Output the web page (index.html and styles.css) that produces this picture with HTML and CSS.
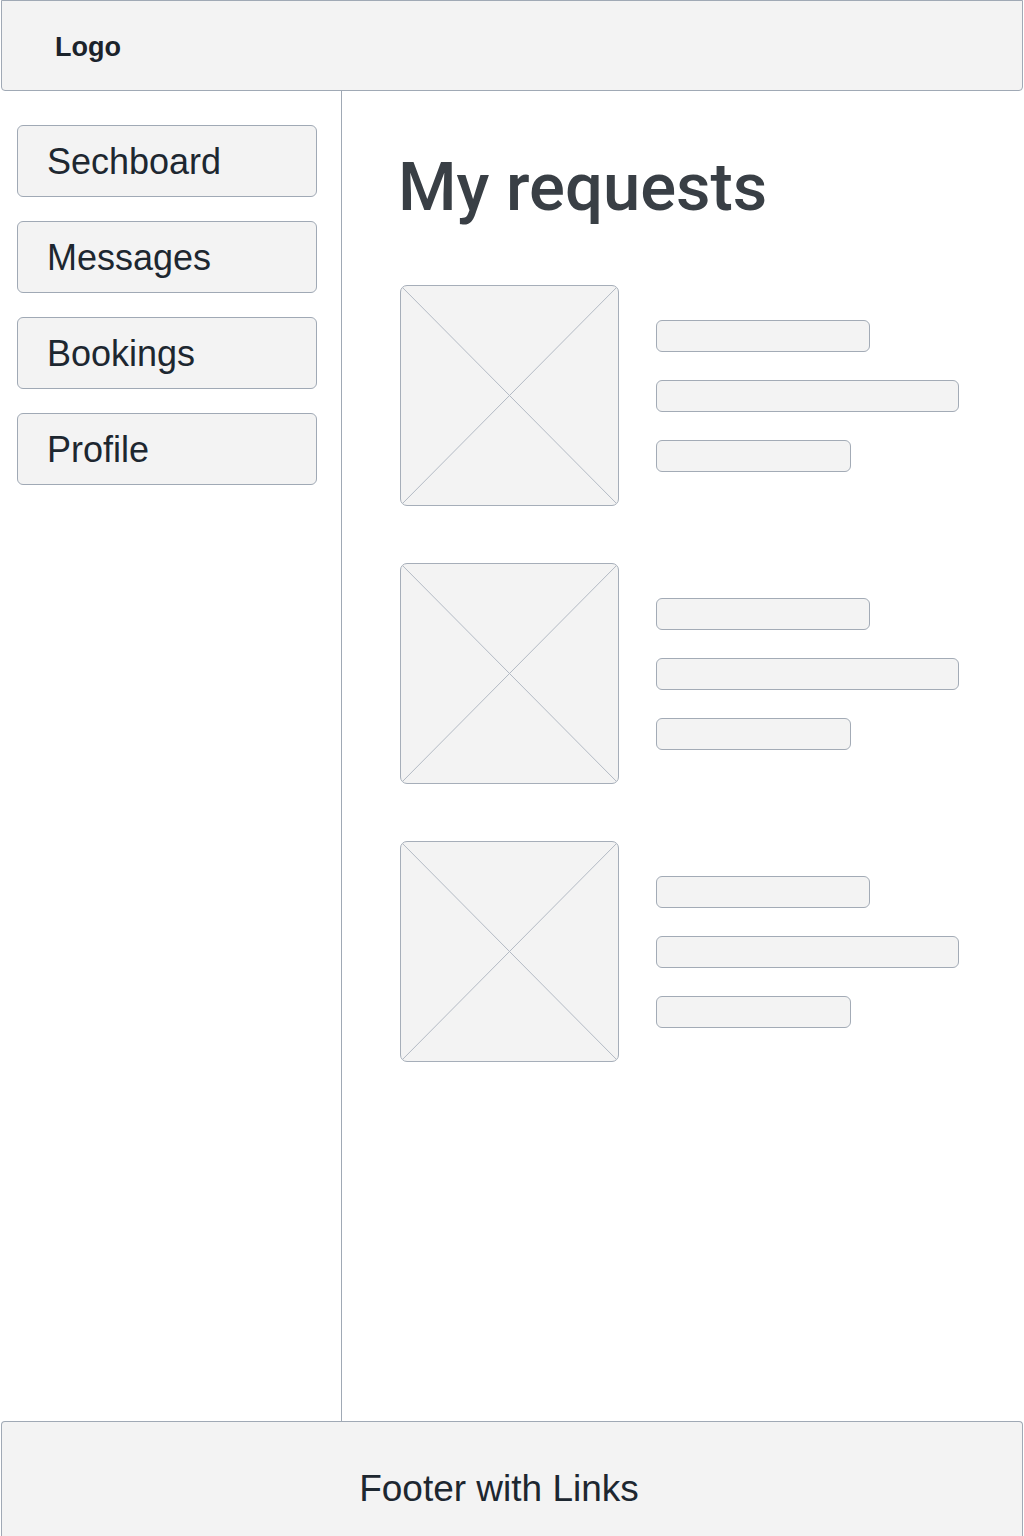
FILE: index.html
```html
<!DOCTYPE html>
<html lang="en">
<head>
<meta charset="utf-8">
<title>My requests</title>
<link rel="stylesheet" href="styles.css">
</head>
<body>
<div class="page">
  <header class="topbar">
    <div class="logo">Logo</div>
  </header>
  <div class="middle">
    <nav class="sidebar">
      <a class="nav-btn">Sechboard</a>
      <a class="nav-btn">Messages</a>
      <a class="nav-btn">Bookings</a>
      <a class="nav-btn">Profile</a>
    </nav>
    <main class="content">
      <h1 class="title">My requests</h1>
      <div class="list">
        <div class="card">
          <div class="thumb">
            <svg viewBox="0 0 100 100" preserveAspectRatio="none"><line x1="0" y1="0" x2="100" y2="100"/><line x1="100" y1="0" x2="0" y2="100"/></svg>
          </div>
          <div class="lines">
            <div class="bar bar-a"></div>
            <div class="bar bar-b"></div>
            <div class="bar bar-c"></div>
          </div>
        </div>
        <div class="card">
          <div class="thumb">
            <svg viewBox="0 0 100 100" preserveAspectRatio="none"><line x1="0" y1="0" x2="100" y2="100"/><line x1="100" y1="0" x2="0" y2="100"/></svg>
          </div>
          <div class="lines">
            <div class="bar bar-a"></div>
            <div class="bar bar-b"></div>
            <div class="bar bar-c"></div>
          </div>
        </div>
        <div class="card">
          <div class="thumb">
            <svg viewBox="0 0 100 100" preserveAspectRatio="none"><line x1="0" y1="0" x2="100" y2="100"/><line x1="100" y1="0" x2="0" y2="100"/></svg>
          </div>
          <div class="lines">
            <div class="bar bar-a"></div>
            <div class="bar bar-b"></div>
            <div class="bar bar-c"></div>
          </div>
        </div>
      </div>
    </main>
  </div>
  <footer class="footer">
    <span class="footer-text">Footer with Links</span>
  </footer>
</div>
</body>
</html>
```
FILE: styles.css
```css
* { box-sizing: border-box; }
html, body { margin: 0; padding: 0; background: #ffffff; }
body {
  font-family: "Liberation Sans", Arial, sans-serif;
  color: #1f2830;
}
.page {
  height: 1536px;
  display: flex;
  flex-direction: column;
  overflow: hidden;
}
.topbar {
  height: 91px;
  flex: none;
  background: #f3f3f3;
  border: 1px solid #a0a9b5;
  border-radius: 0 0 4px 4px;
  margin: 0 1px;
  display: flex;
  align-items: center;
  padding-left: 53px;
}
.logo {
  font-size: 27px;
  font-weight: 700;
  color: #1b232b;
  padding-top: 4px;
}
.middle {
  flex: 1;
  display: flex;
  min-height: 0;
}
.sidebar {
  width: 342px;
  flex: none;
  border-right: 1px solid #a0a9b5;
  padding: 34px 0 0 17px;
  display: flex;
  flex-direction: column;
  gap: 24px;
}
.nav-btn {
  width: 300px;
  height: 72px;
  background: #f3f3f3;
  border: 1px solid #a0a9b5;
  border-radius: 6px;
  display: flex;
  align-items: center;
  padding: 2px 0 0 29px;
  font-size: 36px;
  color: #1d2730;
}
.content {
  flex: 1;
  padding: 58px 0 0 56px;
}
.title {
  margin: 0 0 59px 0;
  font-family: Roboto, "Liberation Sans", sans-serif;
  font-weight: 500;
  font-size: 67px;
  line-height: 77px;
  color: #393f45;
}
.list {
  display: flex;
  flex-direction: column;
  gap: 57px;
  padding-left: 2px;
}
.card {
  display: flex;
  align-items: center;
  gap: 37px;
}
.thumb {
  width: 219px;
  height: 221px;
  background: #f3f3f3;
  border: 1.5px solid #a6aeb9;
  border-radius: 7px;
  overflow: hidden;
  flex: none;
}
.thumb svg {
  display: block;
  width: 100%;
  height: 100%;
}
.thumb line {
  stroke: #b3bac4;
  stroke-width: 1;
  vector-effect: non-scaling-stroke;
}
.lines {
  display: flex;
  flex-direction: column;
  gap: 28px;
}
.bar {
  height: 32px;
  background: #f3f3f3;
  border: 1.5px solid #a3abb6;
  border-radius: 6px;
}
.bar-a { width: 214px; }
.bar-b { width: 303px; }
.bar-c { width: 195px; }
.footer {
  height: 115px;
  flex: none;
  background: #f3f3f3;
  border: 1px solid #a0a9b5;
  border-bottom: none;
  border-radius: 4px 4px 0 0;
  margin: 0 1px;
  display: flex;
  align-items: center;
  justify-content: center;
  padding: 20px 26px 0 0;
}
.footer-text {
  font-size: 37px;
  color: #1d2730;
}
```
